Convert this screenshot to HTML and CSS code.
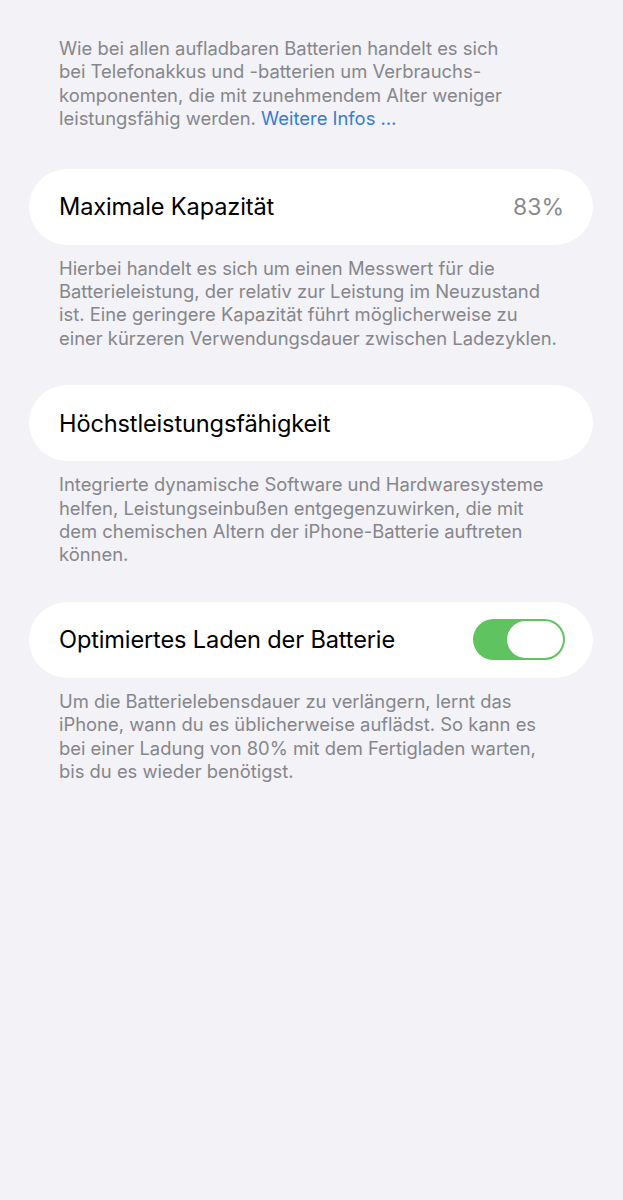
FILE: index.html
```html
<!DOCTYPE html>
<html lang="de">
<head>
<meta charset="utf-8">
<link rel="stylesheet" href="styles.css">
</head>
<body>
<div class="page">
  <p class="note first">Wie bei allen aufladbaren Batterien handelt es sich<br>bei Telefonakkus und -batterien um Verbrauchs-<br>komponenten, die mit zunehmendem Alter weniger<br>leistungsfähig werden. <span class="link">Weitere Infos …</span></p>

  <div class="card">
    <span class="label">Maximale Kapazität</span>
    <span class="value">83%</span>
  </div>
  <p class="note">Hierbei handelt es sich um einen Messwert für die<br>Batterieleistung, der relativ zur Leistung im Neuzustand<br>ist. Eine geringere Kapazität führt möglicherweise zu<br>einer kürzeren Verwendungsdauer zwischen Ladezyklen.</p>

  <div class="card">
    <span class="label">Höchstleistungsfähigkeit</span>
  </div>
  <p class="note">Integrierte dynamische Software und Hardwaresysteme<br>helfen, Leistungseinbußen entgegenzuwirken, die mit<br>dem chemischen Altern der iPhone-Batterie auftreten<br>können.</p>

  <div class="card">
    <span class="label">Optimiertes Laden der Batterie</span>
    <span class="toggle"><span class="knob"></span></span>
  </div>
  <p class="note">Um die Batterielebensdauer zu verlängern, lernt das<br>iPhone, wann du es üblicherweise auflädst. So kann es<br>bei einer Ladung von 80% mit dem Fertigladen warten,<br>bis du es wieder benötigst.</p>
</div>
</body>
</html>
```
FILE: styles.css
```css
html, body {
  margin: 0;
  padding: 0;
  background: #f2f2f7;
}
body {
  font-family: "Inter", "Liberation Sans", sans-serif;
  -webkit-font-smoothing: antialiased;
}
.page {
  width: 623px;
  min-height: 1200px;
  box-sizing: border-box;
  padding: 37px 30px 0 29px;
}
.note {
  margin: 12px -30px 35px 0;
  padding: 0 0 0 30px;
  font-size: 18.4px;
  line-height: 23.4px;
  color: #86868b;
  white-space: nowrap;
}
.note.first {
  margin-top: 0;
  margin-bottom: 38px;
}
.link {
  color: #3a7bd5;
}
.card {
  height: 76px;
  background: #ffffff;
  border-radius: 38px;
  display: flex;
  align-items: center;
  justify-content: space-between;
  padding: 0 29px 0 30px;
}
.label {
  font-size: 23.6px;
  color: #000;
  letter-spacing: -0.15px;
}
.value {
  font-size: 23px;
  color: #8a8a8e;
}
.toggle {
  width: 92px;
  height: 41px;
  border-radius: 21px;
  background: #5fc35f;
  display: flex;
  justify-content: flex-end;
  box-sizing: border-box;
  padding: 2px;
  margin-right: -1px;
}
.knob {
  width: 56px;
  height: 37px;
  border-radius: 19px;
  background: #fff;
}
```
